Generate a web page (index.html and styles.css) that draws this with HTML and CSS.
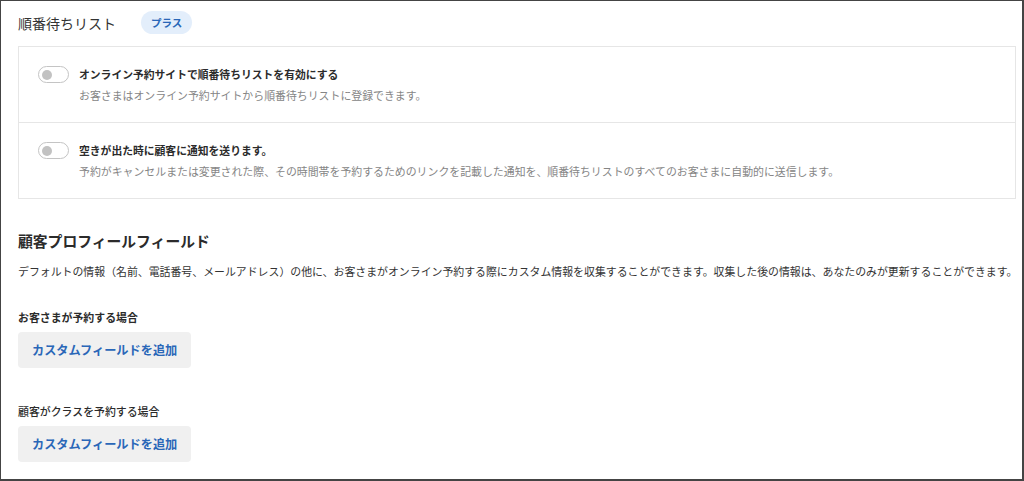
FILE: index.html
```html
<!DOCTYPE html>
<html lang="ja">
<head>
<meta charset="utf-8">
<link rel="stylesheet" href="styles.css">
</head>
<body>
<div class="frame">
  <div class="header">
    <h2 class="title">順番待ちリスト</h2>
    <span class="badge">プラス</span>
  </div>
  <div class="card">
    <div class="row">
      <span class="toggle"><span class="knob"></span></span>
      <div class="row-text">
        <div class="row-title">オンライン予約サイトで順番待ちリストを有効にする</div>
        <div class="row-sub">お客さまはオンライン予約サイトから順番待ちリストに登録できます。</div>
      </div>
    </div>
    <div class="row">
      <span class="toggle"><span class="knob"></span></span>
      <div class="row-text">
        <div class="row-title">空きが出た時に顧客に通知を送ります。</div>
        <div class="row-sub">予約がキャンセルまたは変更された際、その時間帯を予約するためのリンクを記載した通知を、順番待ちリストのすべてのお客さまに自動的に送信します。</div>
      </div>
    </div>
  </div>
  <h2 class="section-title">顧客プロフィールフィールド</h2>
  <p class="desc">デフォルトの情報（名前、電話番号、メールアドレス）の他に、お客さまがオンライン予約する際にカスタム情報を収集することができます。収集した後の情報は、あなたのみが更新することができます。</p>
  <div class="label label-bold">お客さまが予約する場合</div>
  <button class="btn">カスタムフィールドを追加</button>
  <div class="label label-2">顧客がクラスを予約する場合</div>
  <button class="btn">カスタムフィールドを追加</button>
</div>
</body>
</html>
```
FILE: styles.css
```css
* { box-sizing: border-box; }
html, body { margin: 0; padding: 0; background: #fff; }
body {
  font-family: "Noto Sans CJK JP", "Noto Sans", sans-serif;
  color: #333;
}
.frame {
  width: 1024px;
  height: 481px;
  border-style: solid;
  border-color: #444;
  border-width: 1px 2px 2px 1px;
  padding: 10px 6px 0 17px;
  overflow: hidden;
}
.header {
  display: flex;
  align-items: center;
  height: 23px;
}
.title {
  margin: 0;
  font-size: 14px;
  font-weight: 400;
  line-height: 20px;
  color: #333;
}
.badge {
  margin-left: 25px;
  height: 23px;
  padding: 0 10px;
  border-radius: 12px;
  background: #e3eefb;
  color: #2a67b8;
  font-size: 10.5px;
  font-weight: 700;
  line-height: 23px;
}
.card {
  margin-top: 12px;
  border: 1px solid #e6e6e6;
}
.row {
  display: flex;
  align-items: flex-start;
  padding: 19px 0 19px 19px;
}
.row + .row { border-top: 1px solid #e6e6e6; }
.toggle {
  flex: none;
  width: 31px;
  height: 17px;
  border: 1px solid #c4c4c4;
  border-radius: 9px;
  background: #fff;
  display: flex;
  align-items: center;
  padding-left: 3px;
}
.knob {
  width: 10px;
  height: 10px;
  border-radius: 50%;
  background: #c2c2c2;
}
.row-text { margin-left: 10px; }
.row-title {
  font-size: 10.8px;
  font-weight: 700;
  line-height: 16px;
  color: #2b2b2b;
}
.row-sub {
  margin-top: 5px;
  font-size: 10.9px;
  line-height: 16px;
  color: #858585;
}
.section-title {
  margin: 32px 0 0;
  font-size: 14.8px;
  font-weight: 700;
  line-height: 20px;
  color: #2b2b2b;
}
.desc {
  margin: 12px 0 0;
  font-size: 10.9px;
  line-height: 16px;
  color: #333;
  white-space: nowrap;
}
.label {
  font-size: 10.9px;
  line-height: 16px;
  color: #2b2b2b;
}
.label-bold { margin-top: 30px; font-weight: 700; }
.label-2 { margin-top: 35px; font-weight: 500; }
.btn {
  display: block;
  margin-top: 7px;
  height: 36px;
  width: 173px;
  padding: 0 0 0 14px;
  text-align: left;
  border: none;
  border-radius: 4px;
  background: #f0f0f0;
  color: #2a67b8;
  font-family: inherit;
  font-size: 12.2px;
  font-weight: 700;
}
```
